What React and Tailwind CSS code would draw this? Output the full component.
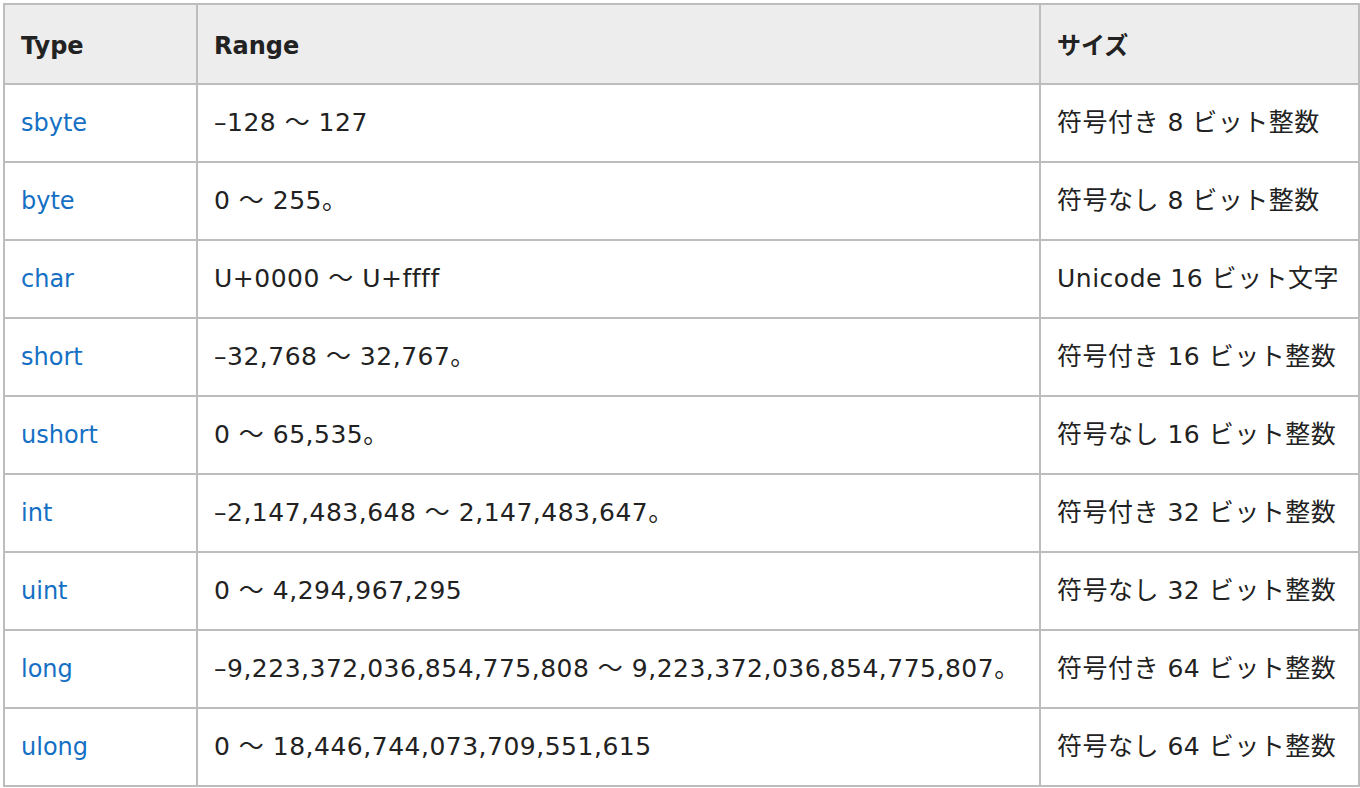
import React from "react";

const rows = [
  ["sbyte", "–128 ～ 127", "符号付き 8 ビット整数"],
  ["byte", "0 ～ 255。", "符号なし 8 ビット整数"],
  ["char", "U+0000 ～ U+ffff", "Unicode 16 ビット文字"],
  ["short", "–32,768 ～ 32,767。", "符号付き 16 ビット整数"],
  ["ushort", "0 ～ 65,535。", "符号なし 16 ビット整数"],
  ["int", "–2,147,483,648 ～ 2,147,483,647。", "符号付き 32 ビット整数"],
  ["uint", "0 ～ 4,294,967,295", "符号なし 32 ビット整数"],
  ["long", "–9,223,372,036,854,775,808 ～ 9,223,372,036,854,775,807。", "符号付き 64 ビット整数"],
  ["ulong", "0 ～ 18,446,744,073,709,551,615", "符号なし 64 ビット整数"],
];

const font = { fontFamily: '"DejaVu Sans", "Noto Sans CJK JP", sans-serif' };

export default function App() {
  return (
    <div className="bg-white w-[1360px] h-[788px] pt-[3px] pl-[3px]" style={font}>
      <table className="border-collapse table-fixed w-[1355px] text-[24px] text-[#222]">
        <colgroup>
          <col className="w-[193px]" />
          <col className="w-[843px]" />
          <col className="w-[319px]" />
        </colgroup>
        <thead>
          <tr className="h-[80px] bg-[#ededed]">
            <th className="border-2 border-[#bdbdbd] text-left font-bold pl-4 pt-1">Type</th>
            <th className="border-2 border-[#bdbdbd] text-left font-bold pl-4 pt-1">Range</th>
            <th className="border-2 border-[#bdbdbd] text-left font-bold pl-4 pt-1">サイズ</th>
          </tr>
        </thead>
        <tbody>
          {rows.map((r) => (
            <tr key={r[0]} className="h-[78px]">
              <td className="border-2 border-[#bdbdbd] pl-4 text-[#1570c4]">{r[0]}</td>
              <td className="border-2 border-[#bdbdbd] pl-4 whitespace-nowrap text-[25px] tracking-[0.5px]">{r[1]}</td>
              <td className="border-2 border-[#bdbdbd] pl-4 whitespace-nowrap text-[25px] tracking-[0.5px]">{r[2]}</td>
            </tr>
          ))}
        </tbody>
      </table>
    </div>
  );
}
